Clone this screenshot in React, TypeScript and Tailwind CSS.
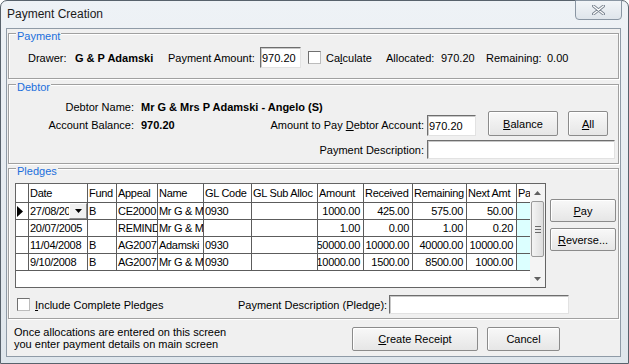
import React from "react";

const cols = [13, 59, 29, 41, 46, 48, 66, 46, 49, 54, 50, 13];
const heads = ["", "Date", "Fund", "Appeal", "Name", "GL Code", "GL Sub Alloc", "Amount", "Received", "Remaining", "Next Amt", "Pa"];

const rows = [
  { sel: true, date: "27/08/2005", dd: true, fund: "B", appeal: "CE2000", name: "Mr G & Mrs P Adamski", gl: "0930", amount: "1000.00", rec: "425.00", rem: "575.00", next: "50.00" },
  { date: "20/07/2005", fund: "", appeal: "REMINDER", name: "Mr G & Mrs P Adamski", gl: "", amount: "1.00", rec: "0.00", rem: "1.00", next: "0.20" },
  { date: "11/04/2008", fund: "B", appeal: "AG2007", name: "Adamski", gl: "0930", amount: "50000.00", rec: "10000.00", rem: "40000.00", next: "10000.00" },
  { date: "9/10/2008", fund: "B", appeal: "AG2007", name: "Mr G & Mrs P Adamski", gl: "0930", amount: "10000.00", rec: "1500.00", rem: "8500.00", next: "1000.00" },
];

function U({ children }: { children: React.ReactNode }) {
  return <span className="underline underline-offset-[1px]">{children}</span>;
}

function Group({ legend, className, children }: { legend: string; className: string; children?: React.ReactNode }) {
  return (
    <div className={`relative mx-px border border-[#a0a0a0] shadow-[inset_1px_1px_0_#fff,1px_1px_0_#fff] ${className}`}>
      <span className="absolute -top-[4px] left-[7px] bg-[#f0f0f0] px-px leading-[13px] text-[#1b6fdc]">{legend}</span>
      {children}
    </div>
  );
}

function Btn({ children, className }: { children: React.ReactNode; className: string }) {
  return (
    <div className={`flex items-center justify-center rounded-[2px] border border-[#8b8b8b] bg-gradient-to-b from-[#f8f8f8] to-[#e6e6e6] shadow-[inset_1px_1px_0_#fff] ${className}`}>
      {children}
    </div>
  );
}

function Input({ value, className }: { value?: string; className: string }) {
  return (
    <div className={`flex items-center border border-t-[#6e6e6e] border-l-[#6e6e6e] border-b-[#e2e2e2] border-r-[#e2e2e2] bg-white pl-px shadow-[inset_1px_1px_0_#c8c8c8] ${className}`}>
      {value}
    </div>
  );
}

function Check() {
  return <div className="h-[13px] w-[13px] shrink-0 border border-t-[#707070] border-l-[#707070] border-b-[#bcbcbc] border-r-[#bcbcbc] bg-white" />;
}

function Cell({ w, right, last, className, children }: { w: number; right?: boolean; last?: boolean; className?: string; children?: React.ReactNode }) {
  return (
    <div
      style={{ width: w }}
      className={`relative flex shrink-0 items-center overflow-hidden whitespace-nowrap ${last ? "" : "border-r border-[#5c5c5c]"} ${right ? "justify-end pr-[3px]" : "pl-px"} ${className ?? ""}`}
    >
      <span className="shrink-0">{children}</span>
    </div>
  );
}

function Grid() {
  return (
    <div className="flex h-[105px] w-[531px] border border-[#646464] bg-white tracking-[-0.3px]">
      <div className="w-[514px]">
        <div className="flex h-[19px] border-b border-[#5c5c5c]">
          {heads.map((h, i) => (
            <Cell key={i} w={cols[i]} last={i === 11}>{h}</Cell>
          ))}
        </div>
        {rows.map((r, i) => (
          <div key={i} className="flex h-[17px] border-b border-[#5c5c5c]">
            <Cell w={cols[0]}>
              {r.sel ? (
                <svg width="7" height="11" viewBox="0 0 7 11" className="mt-px">
                  <path d="M0 0 L6 5.5 L0 11 Z" fill="#000" />
                </svg>
              ) : null}
            </Cell>
            <Cell w={cols[1]}>
              {r.date}
              {r.dd ? (
                <span className="absolute right-0 top-0 flex h-[16px] w-[18px] items-center justify-center border border-t-white border-l-white border-b-[#8a8a8a] border-r-[#8a8a8a] bg-[#f0f0f0]">
                  <svg width="7" height="4" viewBox="0 0 7 4">
                    <path d="M0 0 H7 L3.5 4 Z" fill="#000" />
                  </svg>
                </span>
              ) : null}
            </Cell>
            <Cell w={cols[2]}>{r.fund}</Cell>
            <Cell w={cols[3]}>{r.appeal}</Cell>
            <Cell w={cols[4]}>{r.name}</Cell>
            <Cell w={cols[5]}>{r.gl}</Cell>
            <Cell w={cols[6]}></Cell>
            <Cell w={cols[7]} right>{r.amount}</Cell>
            <Cell w={cols[8]} right>{r.rec}</Cell>
            <Cell w={cols[9]} right>{r.rem}</Cell>
            <Cell w={cols[10]} right>{r.next}</Cell>
            <Cell w={cols[11]} last className="bg-[#dcffff]"></Cell>
          </div>
        ))}
      </div>
      <div className="flex w-[15px] flex-col items-center bg-[#f4f4f4]">
        <div className="flex h-[17px] w-full items-center justify-center">
          <svg width="7" height="4" viewBox="0 0 7 4"><path d="M0 4 H7 L3.5 0 Z" fill="#606060" /></svg>
        </div>
        <div className="flex h-[56px] w-[13px] flex-col items-center justify-center gap-[2px] rounded-[2px] border border-[#9a9a9a] bg-gradient-to-r from-[#f4f4f4] to-[#dedede]">
          <div className="h-px w-[6px] bg-[#6a6a6a]" />
          <div className="h-px w-[6px] bg-[#6a6a6a]" />
          <div className="h-px w-[6px] bg-[#6a6a6a]" />
        </div>
        <div className="flex-1" />
        <div className="flex h-[17px] w-full items-center justify-center">
          <svg width="7" height="4" viewBox="0 0 7 4"><path d="M0 0 H7 L3.5 4 Z" fill="#606060" /></svg>
        </div>
      </div>
    </div>
  );
}

export default function App() {
  return (
    <div className="flex h-[364px] w-[629px] flex-col rounded-t-[7px] border border-[#58626c] bg-gradient-to-b from-[#eef2f6] to-[#dfe6ec] pb-[6px] pl-[5px] pr-[7px] font-['Liberation_Sans',Arial,sans-serif] text-[11px] leading-[14px] text-black">
      <div className="flex h-[27px] shrink-0 items-start justify-between">
        <span className="ml-px mt-[6px] text-[12px] leading-[15px] text-[#1a1a1a]">Payment Creation</span>
        <div className="-mr-px -mt-px flex h-[20px] w-[47px] items-center justify-center rounded-b-[4px] border border-[#8a96a3] bg-gradient-to-b from-[#f2f5f8] to-[#dfe5eb]">
          <svg width="13" height="10" viewBox="0 0 13 10">
            <path d="M1.5 1 L11.5 9 M11.5 1 L1.5 9" stroke="#7b8591" strokeWidth="3" strokeLinecap="round" />
            <path d="M1.5 1 L11.5 9 M11.5 1 L1.5 9" stroke="#fff" strokeWidth="1.2" strokeLinecap="round" />
          </svg>
        </div>
      </div>

      <div className="flex flex-1 flex-col border border-[#8f9ba7] bg-[#f0f0f0]">
        <Group legend="Payment" className="mt-[4px] h-[46px]">
          <div className="mt-[13px] flex h-[21px] items-center">
            <span className="ml-[19px] w-[47px]">Drawer:</span>
            <span className="w-[93px] font-bold">G &amp; P Adamski</span>
            <span className="w-[92px]">Payment Amount:</span>
            <Input value="970.20" className="h-[21px] w-[41px]" />
            <div className="ml-[7px]"><Check /></div>
            <span className="ml-[5px] w-[60px]">Ca<U>l</U>culate</span>
            <span className="w-[55px]">Allocated:</span>
            <span className="w-[45px]">970.20</span>
            <span className="w-[61px]">Remaining:</span>
            <span>0.00</span>
          </div>
        </Group>

        <Group legend="Debtor" className="mt-[5px] h-[80px]">
          <div className="mt-[15px] flex">
            <span className="w-[125px] text-right">Debtor Name:</span>
            <span className="ml-[7px] font-bold">Mr G &amp; Mrs P Adamski - Angelo (S)</span>
          </div>
          <div className="-mt-[3px] flex h-[25px] items-end">
            <span className="mb-[4px] w-[125px] text-right">Account Balance:</span>
            <span className="mb-[4px] ml-[7px] w-[100px] font-bold">970.20</span>
            <span className="mb-[4px] w-[183px] text-right">Amount to Pay <U>D</U>ebtor Account:</span>
            <Input value="970.20" className="ml-[3px] h-[21px] w-[49px]" />
            <Btn className="ml-[12px] h-[25px] w-[70px]"><span><U>B</U>alance</span></Btn>
            <Btn className="ml-[10px] h-[25px] w-[40px]"><span><U>A</U>ll</span></Btn>
          </div>
          <div className="mt-[4px] flex h-[19px] items-center">
            <span className="w-[415px] text-right">Payment Description:</span>
            <Input className="ml-[3px] h-[19px] w-[188px]" />
          </div>
        </Group>

        <Group legend="Pledges" className="mt-[4px] h-[151px]">
          <div className="ml-[6px] mt-[14px] flex">
            <Grid />
            <div className="ml-[4px] flex flex-col">
              <Btn className="mt-[16px] h-[23px] w-[66px]"><span><U>P</U>ay</span></Btn>
              <Btn className="mt-[6px] h-[23px] w-[66px]"><span><U>R</U>everse...</span></Btn>
            </div>
          </div>
          <div className="mt-[7px] flex h-[19px] items-center">
            <div className="ml-[8px]"><Check /></div>
            <span className="ml-[5px] w-[203px]"><U>I</U>nclude Complete Pledges</span>
            <span className="w-[151px]">Payment Description (Pledge):</span>
            <Input className="h-[19px] w-[180px]" />
          </div>
        </Group>

        <div className="mt-[8px] flex items-start">
          <div className="-mt-px ml-[7px] w-[338px] leading-[12px]">
            <div>Once allocations are entered on this screen</div>
            <div>you enter payment details on main screen</div>
          </div>
          <Btn className="h-[24px] w-[126px]"><span><U>C</U>reate Receipt</span></Btn>
          <Btn className="ml-[9px] h-[24px] w-[73px]"><span>Cancel</span></Btn>
        </div>
      </div>
    </div>
  );
}
